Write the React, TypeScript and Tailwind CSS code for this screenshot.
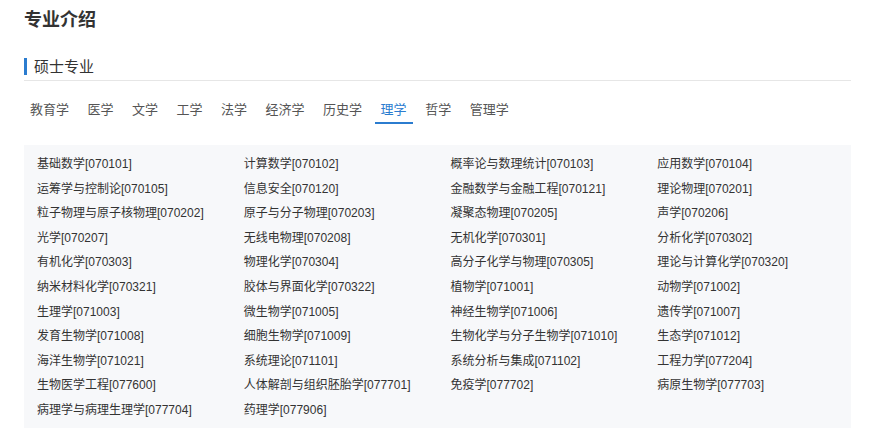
import React from "react";

const tabs = ["教育学", "医学", "文学", "工学", "法学", "经济学", "历史学", "理学", "哲学", "管理学"];

const items = [
  "基础数学[070101]", "计算数学[070102]", "概率论与数理统计[070103]", "应用数学[070104]",
  "运筹学与控制论[070105]", "信息安全[070120]", "金融数学与金融工程[070121]", "理论物理[070201]",
  "粒子物理与原子核物理[070202]", "原子与分子物理[070203]", "凝聚态物理[070205]", "声学[070206]",
  "光学[070207]", "无线电物理[070208]", "无机化学[070301]", "分析化学[070302]",
  "有机化学[070303]", "物理化学[070304]", "高分子化学与物理[070305]", "理论与计算化学[070320]",
  "纳米材料化学[070321]", "胶体与界面化学[070322]", "植物学[071001]", "动物学[071002]",
  "生理学[071003]", "微生物学[071005]", "神经生物学[071006]", "遗传学[071007]",
  "发育生物学[071008]", "细胞生物学[071009]", "生物化学与分子生物学[071010]", "生态学[071012]",
  "海洋生物学[071021]", "系统理论[071101]", "系统分析与集成[071102]", "工程力学[077204]",
  "生物医学工程[077600]", "人体解剖与组织胚胎学[077701]", "免疫学[077702]", "病原生物学[077703]",
  "病理学与病理生理学[077704]", "药理学[077906]",
];

export default function App() {
  return (
    <div
      className="w-[872px] h-[441px] bg-white overflow-hidden text-[#333]"
      style={{ fontFamily: '"Liberation Sans", "Noto Sans CJK SC", sans-serif' }}
    >
      <div className="pl-[24px] pr-[21px]">
        <h1 className="pt-[8px] h-[50px] text-[18px] leading-[24px] font-bold text-[#333]">专业介绍</h1>
        <div className="h-[31px] border-b border-[#e6e6e6] flex items-start">
          <div className="flex items-center h-[19px] mt-[7px]">
            <div className="w-[3px] h-[17px] bg-[#2b7ccf]" />
            <span className="ml-[7px] text-[15px] leading-[19px] text-[#333]">硕士专业</span>
          </div>
        </div>
        <div className="flex gap-[6.5px] mt-[17px] h-[26px]">
          {tabs.map((t) => (
            <div
              key={t}
              className={
                t === "理学"
                  ? "px-[6px] text-[13px] leading-[24px] text-[#2b7ccf] border-b-2 border-[#2b7ccf]"
                  : "px-[6px] text-[13px] leading-[24px] text-[#555]"
              }
            >
              {t}
            </div>
          ))}
        </div>
        <div className="mt-[21px] bg-[#f7f8fa] w-[827px] pt-[7px] pb-[5px] grid grid-cols-4">
          {items.map((it) => (
            <div key={it} className="pl-[13px] h-[24.6px] text-[12px] leading-[24.6px] text-[#333] whitespace-nowrap">
              {it}
            </div>
          ))}
        </div>
      </div>
    </div>
  );
}
